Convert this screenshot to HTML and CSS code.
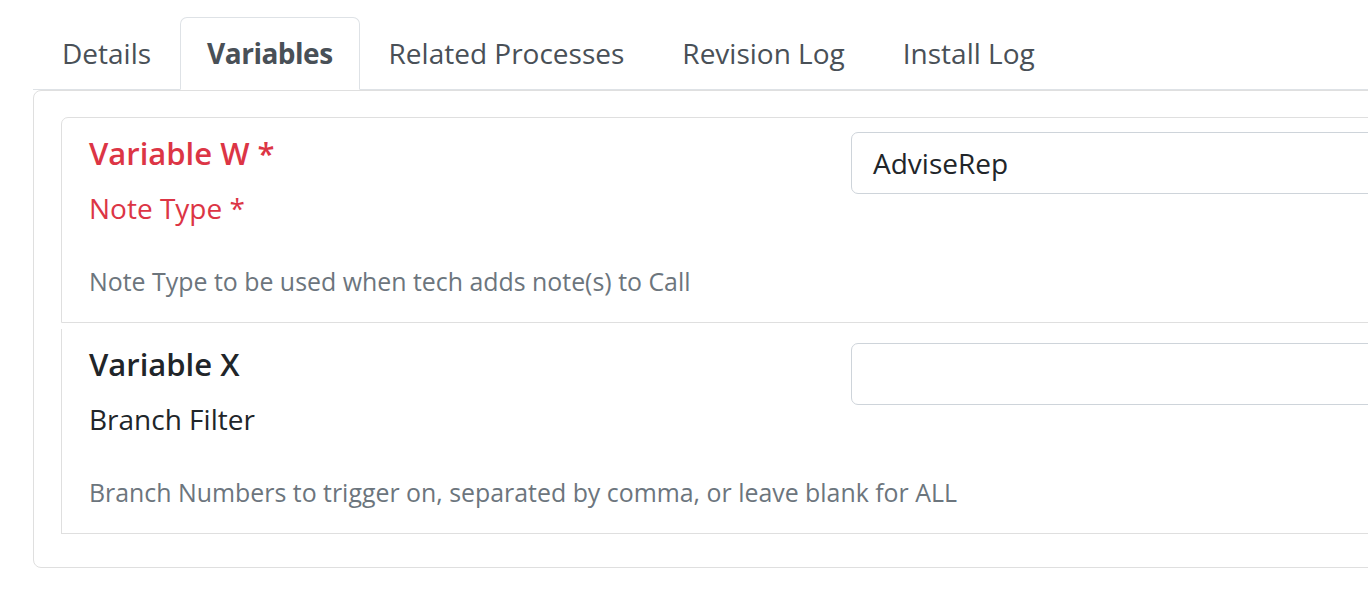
FILE: index.html
```html
<!DOCTYPE html>
<html lang="en">
<head>
<meta charset="utf-8">
<title>Variables</title>
<link rel="stylesheet" href="styles.css">
</head>
<body>
<div class="page">
  <ul class="tabs">
    <li class="tab">Details</li>
    <li class="tab active">Variables</li>
    <li class="tab">Related Processes</li>
    <li class="tab">Revision Log</li>
    <li class="tab">Install Log</li>
  </ul>
  <div class="card">
    <div class="list">
      <div class="item first">
        <div class="row">
          <div class="labels">
            <div class="title required">Variable W *</div>
            <div class="name required">Note Type *</div>
          </div>
          <div class="field"><div class="input">AdviseRep</div></div>
        </div>
        <div class="help">Note Type to be used when tech adds note(s) to Call</div>
      </div>
      <div class="item second">
        <div class="row">
          <div class="labels">
            <div class="title">Variable X</div>
            <div class="name">Branch Filter</div>
          </div>
          <div class="field"><div class="input"></div></div>
        </div>
        <div class="help">Branch Numbers to trigger on, separated by comma, or leave blank for ALL</div>
      </div>
    </div>
  </div>
</div>
</body>
</html>
```
FILE: styles.css
```css
html, body {
  margin: 0;
  padding: 0;
  background: #fff;
  overflow: hidden;
}
body {
  font-family: "Open Sans", "Noto Sans", sans-serif;
  font-size: 28px;
  color: #212529;
}
.page {
  width: 1700px;
  padding: 17px 0 0 33px;
}
.tabs {
  display: flex;
  list-style: none;
  margin: 0;
  padding: 0;
  border-bottom: 1px solid #dee2e6;
}
.tab {
  padding: 14px 28px;
  line-height: 43px;
  border: 1px solid transparent;
  border-radius: 7px 7px 0 0;
  margin-bottom: -1px;
  color: #495057;
}
.tab.active {
  border-color: #dee2e6 #dee2e6 #fff;
  background: #fff;
  font-weight: 700;
  letter-spacing: -0.5px;
  padding: 14px 26px;
}
.card {
  border: 1px solid #dfdfdf;
  border-radius: 8px;
  padding: 26px 27px 33px;
}
.list {
  display: flex;
  flex-direction: column;
}
.item {
  box-sizing: border-box;
  border: 1px solid #dfdfdf;
  padding: 14px 27px 0;
  height: 206px;
}
.item.first {
  border-radius: 7px 0 0 0;
}
.item.second {
  border-top: 0;
  margin-top: 6px;
  height: 205px;
}
.row {
  display: flex;
}
.labels {
  width: 762px;
  flex: none;
}
.field {
  flex: 1;
}
.title {
  font-size: 31px;
  line-height: 43px;
  font-weight: 600;
  margin-bottom: 12px;
}
.name {
  line-height: 42px;
}
.required {
  color: #dc3545;
}
.input {
  box-sizing: border-box;
  height: 62px;
  border: 1px solid #ced4da;
  border-radius: 7px;
  padding: 0 21px;
  line-height: 60px;
  color: #212529;
}
.help {
  margin-top: 34px;
  font-size: 24.9px;
  line-height: 37px;
  color: #6c757d;
}
```
